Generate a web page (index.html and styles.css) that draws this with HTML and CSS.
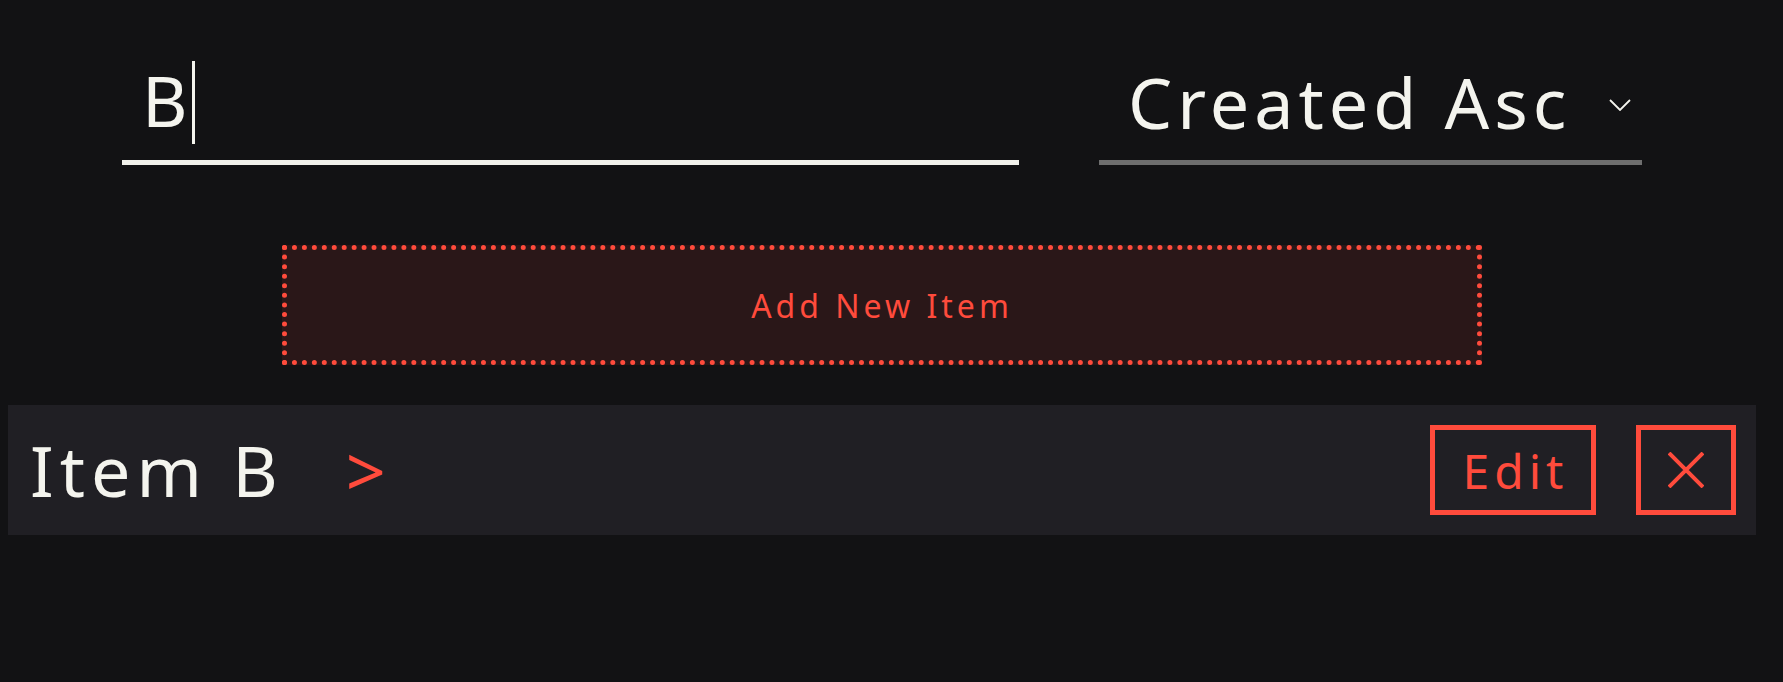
FILE: index.html
```html
<!DOCTYPE html>
<html lang="en">
<head>
<meta charset="utf-8">
<title>Items</title>
<link rel="stylesheet" href="styles.css">
</head>
<body>
<div class="app">
  <div class="toolbar">
    <div class="search">
      <span class="search-text">B</span><span class="caret"></span>
    </div>
    <div class="select">
      <span class="select-text">Created Asc</span>
      <svg class="chevron" width="22" height="12" viewBox="0 0 22 12"><path d="M1 1 L11 11 L21 1" fill="none" stroke="#f4f4ee" stroke-width="1.8"/></svg>
    </div>
  </div>
  <div class="add-item">Add New Item</div>
  <div class="list">
    <div class="row">
      <div class="row-title"><span class="item-name">Item B</span><span class="arrow">&gt;</span></div>
      <div class="row-actions">
        <div class="btn btn-edit">Edit</div>
        <div class="btn btn-close">
          <svg width="36" height="36" viewBox="0 0 36 36"><path d="M1 1 L35 35 M35 1 L1 35" fill="none" stroke="#ff4b3c" stroke-width="4"/></svg>
        </div>
      </div>
    </div>
  </div>
</div>
</body>
</html>
```

FILE: styles.css
```css
html, body {
  margin: 0;
  padding: 0;
  background: #121214;
}

body {
  font-family: "Noto Sans", "Open Sans", sans-serif;
  color: #f4f4ee;
}

.app {
  width: 1748px;
  margin-left: 8px;
}

.toolbar {
  display: flex;
  gap: 80px;
  padding: 40px 114px 0;
}

.search {
  width: 897px;
  box-sizing: border-box;
  height: 125px;
  padding-left: 20px;
  border-bottom: 5px solid #f1f1eb;
  display: flex;
  align-items: center;
}

.search-text {
  font-size: 70px;
  line-height: 70px;
  letter-spacing: 4px;
}

.caret {
  width: 3px;
  height: 83px;
  margin-top: 5px;
  background: #f4f4ee;
}

.select {
  width: 543px;
  box-sizing: border-box;
  height: 125px;
  padding: 0 11px 0 29px;
  border-bottom: 5px solid #6e6e6e;
  display: flex;
  align-items: center;
  justify-content: space-between;
}

.select-text {
  font-size: 70px;
  line-height: 70px;
  letter-spacing: 5px;
  padding-top: 4px;
}

.chevron {
  margin-top: 10px;
}

.add-item {
  width: 1200px;
  height: 120px;
  box-sizing: border-box;
  margin: 80px auto 0;
  border: 5px dotted #ff4b3c;
  background: #2a1718;
  color: #ff4b3c;
  font-size: 32px;
  letter-spacing: 4px;
  display: flex;
  align-items: center;
  justify-content: center;
}

.list {
  margin-top: 40px;
}

.row {
  display: flex;
  align-items: center;
  justify-content: space-between;
  background: #201f24;
  padding: 20px 20px 20px 22px;
}

.row-title {
  display: flex;
  align-items: center;
}

.item-name {
  font-size: 70px;
  line-height: 70px;
  letter-spacing: 6px;
}

.arrow {
  font-size: 70px;
  line-height: 70px;
  color: #ff4b3c;
  margin-left: 62px;
}

.row-actions {
  display: flex;
  gap: 40px;
}

.btn {
  height: 90px;
  box-sizing: border-box;
  border: 5px solid #ff4b3c;
  display: flex;
  align-items: center;
  justify-content: center;
  color: #ff4b3c;
}

.btn-edit {
  width: 166px;
  font-size: 48px;
  letter-spacing: 5px;
  padding-left: 5px;
}

.btn-close {
  width: 100px;
}
```
